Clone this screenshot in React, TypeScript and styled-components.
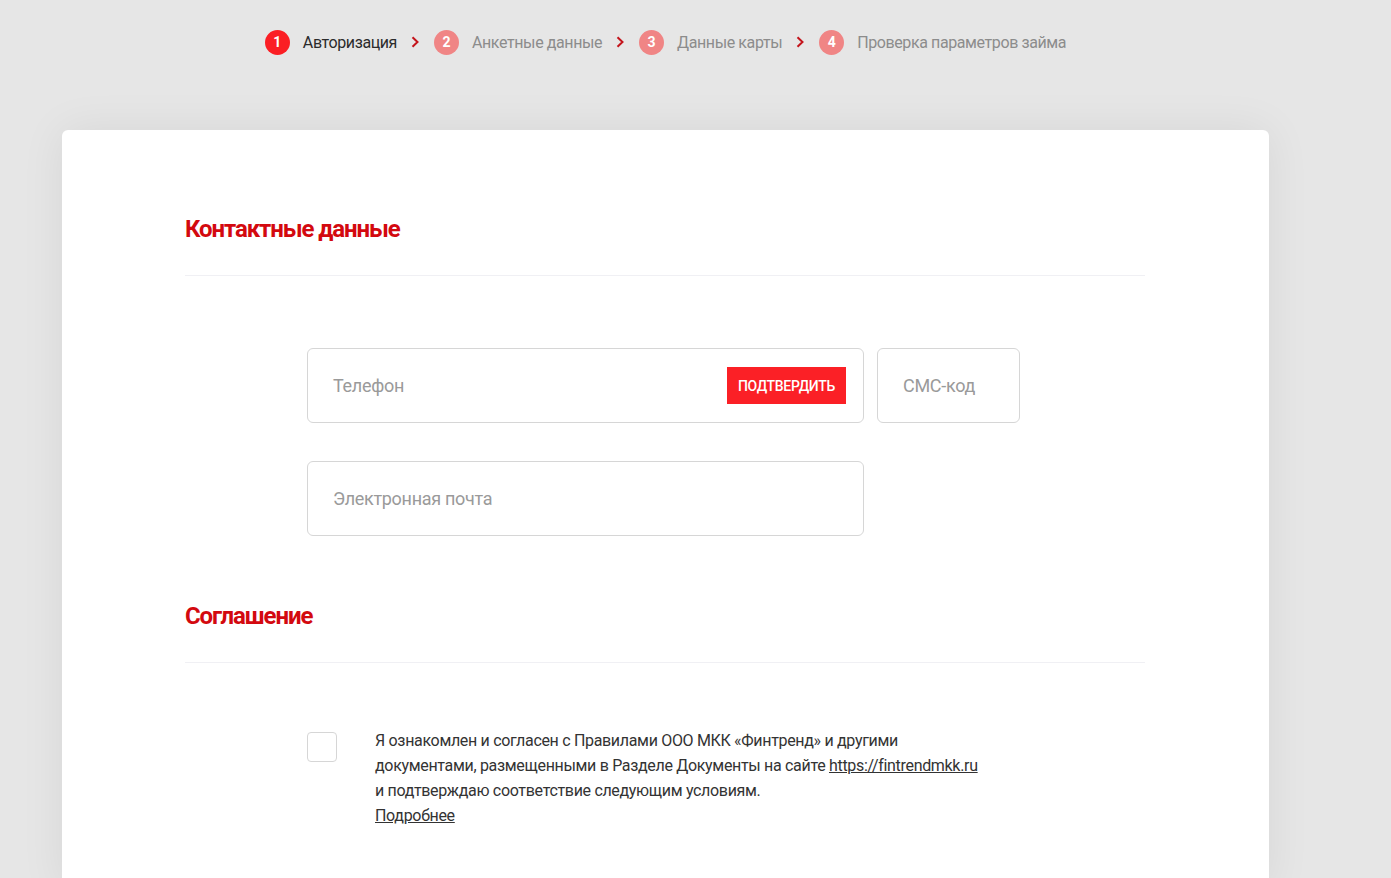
import styled, { createGlobalStyle } from "styled-components";

const GlobalStyle = createGlobalStyle`
    html, body {
        margin: 0;
        padding: 0;
        background: #e6e6e6;
        font-family: Roboto, "Liberation Sans", sans-serif;
        color: #333;
    }
    * {
        box-sizing: border-box;
    }
`;

const Page = styled.div`
    width: 1329px;
    padding: 29px 0 0 62px;
    height: 878px;
    overflow: hidden;
`;

const Steps = styled.ol`
    display: flex;
    justify-content: center;
    align-items: center;
    width: 1207px;
    height: 26px;
    margin: 0 0 75px;
    padding: 0;
    list-style: none;
`;

const Step = styled.li<{ $active?: boolean }>`
    display: flex;
    align-items: center;
    font-size: 16px;
    letter-spacing: -0.4px;
    color: ${(p) => (p.$active ? "#2b2b2b" : "#8c8c8c")};
`;

const StepNum = styled.span<{ $active?: boolean }>`
    display: flex;
    align-items: center;
    justify-content: center;
    width: 25px;
    height: 25px;
    margin-right: 13px;
    border-radius: 50%;
    background: ${(p) => (p.$active ? "#fb1e24" : "#f08585")};
    color: #fff;
    font-size: 14px;
    font-weight: 700;
    letter-spacing: 0;
`;

const Arrow = styled.svg`
    width: 8px;
    height: 12px;
    margin: 0 15px 0 14px;
    flex-shrink: 0;
`;

const Card = styled.div`
    width: 1207px;
    min-height: 760px;
    padding: 84px 124px 0 123px;
    background: #fff;
    border-radius: 6px 6px 0 0;
    box-shadow: 0 0 45px rgba(0, 0, 0, 0.07);
`;

const Title = styled.h2`
    margin: 0;
    font-size: 24px;
    line-height: 30px;
    font-weight: 700;
    letter-spacing: -1.1px;
    color: #d3090f;
`;

const Divider = styled.hr<{ $after: number }>`
    margin: 31px 0 ${(p) => p.$after}px;
    border: 0;
    height: 1px;
    background: #f0f0f4;
`;

const Fields = styled.div`
    display: flex;
    flex-direction: column;
    gap: 38px;
    padding-left: 122px;
    margin-bottom: 65px;
`;

const FieldRow = styled.div`
    display: flex;
    gap: 13px;
`;

const Field = styled.div<{ $width: number }>`
    display: flex;
    align-items: center;
    justify-content: space-between;
    width: ${(p) => p.$width}px;
    height: 75px;
    padding: 0 17px 0 25px;
    border: 1px solid #d6d6d6;
    border-radius: 6px;
    background: #fff;
`;

const Placeholder = styled.span`
    font-size: 18px;
    letter-spacing: -0.3px;
    color: #9a9a9a;
`;

const ConfirmButton = styled.button`
    height: 37px;
    padding: 0 11px;
    border: 0;
    background: #fb2026;
    color: #fff;
    font-family: inherit;
    font-size: 14px;
    font-weight: 500;
    letter-spacing: -0.3px;
    text-transform: uppercase;
    cursor: pointer;
`;

const Agreement = styled.label`
    display: flex;
    align-items: flex-start;
    gap: 38px;
    padding-left: 122px;
`;

const Checkbox = styled.span`
    flex-shrink: 0;
    width: 30px;
    height: 30px;
    margin-top: 4px;
    border: 1px solid #d6d6d6;
    border-radius: 4px;
`;

const AgreementText = styled.p`
    margin: 0;
    font-size: 16px;
    line-height: 25px;
    letter-spacing: -0.32px;
    color: #333;

    a {
        color: #333;
        text-decoration: underline;
    }
`;

const steps = [
    "Авторизация",
    "Анкетные данные",
    "Данные карты",
    "Проверка параметров займа",
];

const Chevron = () => (
    <Arrow viewBox="0 0 8 12">
        <path d="M1.5 1.2l5 4.8-5 4.8" fill="none" stroke="#c4141b" strokeWidth="2" />
    </Arrow>
);

export default function App() {
    return (
        <>
            <GlobalStyle />
            <Page>
                <Steps>
                    {steps.map((label, i) => (
                        <Step key={label} $active={i === 0}>
                            <StepNum $active={i === 0}>{i + 1}</StepNum>
                            {label}
                            {i < steps.length - 1 && <Chevron />}
                        </Step>
                    ))}
                </Steps>

                <Card>
                    <Title>Контактные данные</Title>
                    <Divider $after={72} />
                    <Fields>
                        <FieldRow>
                            <Field $width={557}>
                                <Placeholder>Телефон</Placeholder>
                                <ConfirmButton>Подтвердить</ConfirmButton>
                            </Field>
                            <Field $width={143}>
                                <Placeholder>СМС-код</Placeholder>
                            </Field>
                        </FieldRow>
                        <FieldRow>
                            <Field $width={557}>
                                <Placeholder>Электронная почта</Placeholder>
                            </Field>
                        </FieldRow>
                    </Fields>

                    <Title>Соглашение</Title>
                    <Divider $after={65} />
                    <Agreement>
                        <Checkbox />
                        <AgreementText>
                            Я ознакомлен и согласен с Правилами ООО МКК «Финтренд» и другими
                            <br />
                            документами, размещенными в Разделе Документы на сайте{" "}
                            <a href="#">https://fintrendmkk.ru</a>
                            <br />
                            и подтверждаю соответствие следующим условиям.
                            <br />
                            <a href="#">Подробнее</a>
                        </AgreementText>
                    </Agreement>
                </Card>
            </Page>
        </>
    );
}
